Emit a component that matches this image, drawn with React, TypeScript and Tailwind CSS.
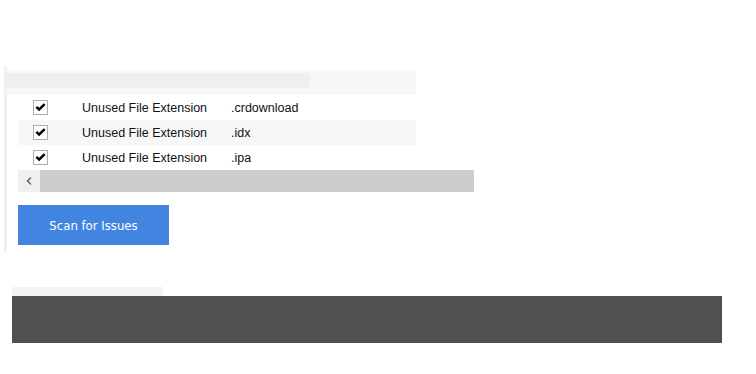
import { ChevronLeft } from "lucide-react";

const rows = [
  { name: "Unused File Extension", ext: ".crdownload" },
  { name: "Unused File Extension", ext: ".idx" },
  { name: "Unused File Extension", ext: ".ipa" },
];

function Tick() {
  return (
    <svg viewBox="0 0 12 12" className="w-[11px] h-[11px]">
      <path d="M0.5 6.3 L2.4 4.4 L4.5 6.4 L9.6 1.3 L11.5 3.2 L4.5 10.2 Z" fill="#000" />
    </svg>
  );
}

export default function App() {
  return (
    <div className="w-[756px] h-[374px] bg-white relative font-['Liberation_Sans',Arial,sans-serif] text-[12.5px] text-[#111]">
      <div className="pt-[66px] pl-1 flex flex-col">
        <div className="flex">
          {/* left rule */}
          <div className="w-[3px] h-[186px] bg-[#f0f0f0]" />
          <div className="flex flex-col">
            <div className="mt-1 w-[409px] h-[25px] bg-[#f7f7f7] pt-[3px]">
              <div className="w-[303px] h-[15px] bg-[#efefef]" />
            </div>
            <div className="pl-[11px] w-[409px]">
              {rows.map((r, i) => (
                <div
                  key={r.ext}
                  className={`h-[25px] flex items-center ${i % 2 === 1 ? "bg-[#f7f7f7]" : "bg-white"}`}
                >
                  <div className="ml-[15px] w-[15px] h-[15px] border border-[#adadad] bg-white flex items-center justify-center">
                    <Tick />
                  </div>
                  <span className="ml-[34px] w-[149px] pt-[2px]">{r.name}</span>
                  <span className="pt-[2px]">{r.ext}</span>
                </div>
              ))}
              <div className="w-[456px] h-[22px] bg-[#cdcdcd] flex">
                <div className="w-[22px] h-full bg-[#efefef] flex items-center justify-center">
                  <ChevronLeft className="w-3 h-3 text-[#606060]" strokeWidth={3} />
                </div>
              </div>
              <button className="mt-[13px] w-[151px] h-10 bg-[#4185e0] text-white text-[13px] pt-px font-['DejaVu_Sans_Condensed','Liberation_Sans_Narrow',sans-serif]">
                Scan for Issues
              </button>
            </div>
          </div>
        </div>
        <div className="mt-[35px] ml-2 w-[151px] h-[9px] bg-[#f3f3f3]" />
        <div className="ml-2 w-[710px] h-[47px] bg-[#505050]" />
      </div>
    </div>
  );
}
